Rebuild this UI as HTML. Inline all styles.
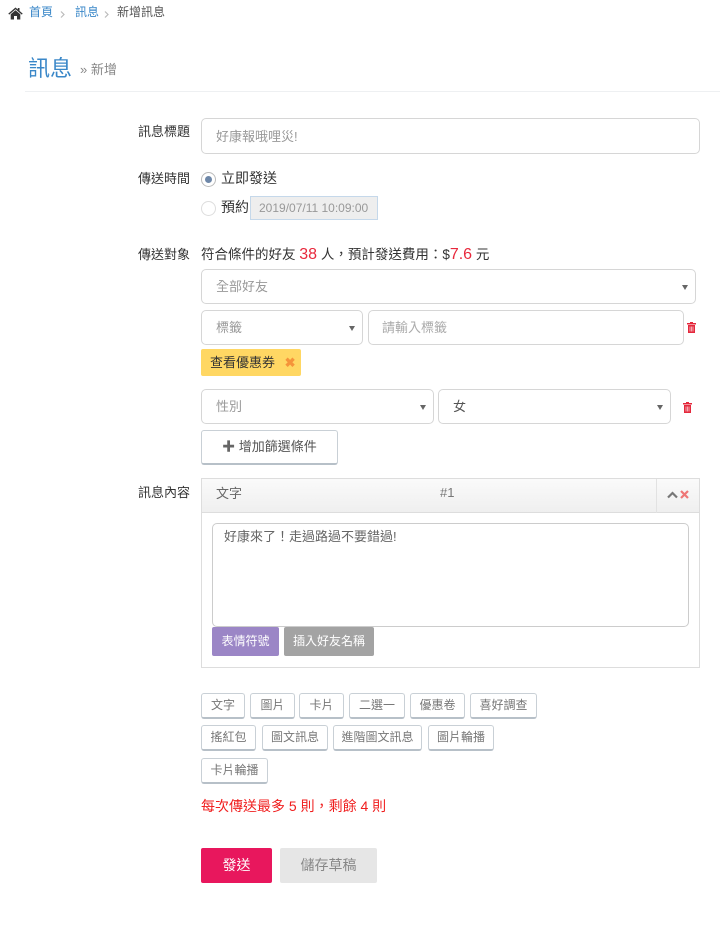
<!DOCTYPE html>
<html><head><meta charset="utf-8"><style>
*{box-sizing:border-box;margin:0;padding:0}
body{width:720px;height:929px;background:#fff;font-family:"Liberation Sans","Noto Sans CJK TC",sans-serif;color:#333;position:relative;overflow:hidden;font-size:13px}
.a{position:absolute;white-space:nowrap;line-height:1.45}
.box{position:absolute;border:1px solid #d6d6d6;border-radius:5px;background:#fff}
.ph{color:#999;font-size:13px}
.caret{position:absolute;right:7px;top:50%;margin-top:-2px;border-left:3px solid transparent;border-right:3px solid transparent;border-top:5px solid #666}
.btn{position:absolute;height:26px;border:1px solid #c9d0d6;border-bottom:2px solid #b7c0c8;border-radius:3px;font-size:12px;color:#777;text-align:center;line-height:23px;background:#fff}
.lbl{position:absolute;left:138px;font-size:13px;color:#333;line-height:1.45}
.trash{position:absolute;width:9px;height:11px}
</style></head><body>
<svg class="a" style="left:8px;top:7px" width="15" height="13" viewBox="0 0 15 13"><path d="M7.5 0.5L0.3 6.6 1.2 7.6 7.5 2.3 13.8 7.6 14.7 6.6 11.5 3.9V1H9.8V2.5Z" fill="#333"/><path d="M2.7 7.2L7.5 3.2 12.3 7.2V12.5H9V9H6V12.5H2.7Z" fill="#333"/></svg>
<div class="a" style="left:29px;top:4px;font-size:12px;color:#3a87c8">首頁</div>
<svg class="a" style="left:60px;top:11px" width="5" height="7" viewBox="0 0 5 7"><path d="M1 0.5L4 3.5 1 6.5" stroke="#bbb" fill="none" stroke-width="1.2"/></svg>
<div class="a" style="left:75px;top:4px;font-size:12px;color:#3a87c8">訊息</div>
<svg class="a" style="left:104px;top:11px" width="5" height="7" viewBox="0 0 5 7"><path d="M1 0.5L4 3.5 1 6.5" stroke="#bbb" fill="none" stroke-width="1.2"/></svg>
<div class="a" style="left:117px;top:4px;font-size:12px;color:#555">新增訊息</div>
<div class="a" style="left:28px;top:53px;font-size:22px;color:#3a87c8">訊息</div>
<div class="a" style="left:80px;top:61px;font-size:13px;color:#888">» 新增</div>
<div class="a" style="left:25px;top:91px;width:695px;height:1px;background:#eef0f2"></div>

<div class="lbl" style="top:123px">訊息標題</div>
<div class="box" style="left:201px;top:118px;width:499px;height:36px"><span class="a ph" style="left:14px;top:9px">好康報哦哩災!</span></div>

<div class="lbl" style="top:170px">傳送時間</div>
<div class="a" style="left:201px;top:172px;width:15px;height:15px;border:1px solid #bbb;border-radius:50%;background:#fff"><div class="a" style="left:3px;top:3px;width:7px;height:7px;border-radius:50%;background:#6e87a8"></div></div>
<div class="a" style="left:221px;top:168px;font-size:14px">立即發送</div>
<div class="a" style="left:201px;top:201px;width:15px;height:15px;border:1px solid #ddd;border-radius:50%"></div>
<div class="a" style="left:221px;top:197px;font-size:14px">預約</div>
<div class="a" style="left:250px;top:196px;width:128px;height:24px;border:1px solid #c5d8ea;background:#eee;color:#999;font-size:12px;line-height:22px;padding-left:8px">2019/07/11 10:09:00</div>

<div class="lbl" style="top:246px">傳送對象</div>
<div class="a" style="left:201px;top:243px;font-size:13.5px">符合條件的好友 <span style="color:#e8283c;font-size:16px">38</span> 人，預計發送費用：$<span style="color:#e8283c;font-size:16px">7.6</span> 元</div>
<div class="box" style="left:201px;top:269px;width:495px;height:35px"><span class="a ph" style="left:14px;top:8px">全部好友</span><i class="caret"></i></div>
<div class="box" style="left:201px;top:310px;width:162px;height:35px"><span class="a ph" style="left:14px;top:8px">標籤</span><i class="caret"></i></div>
<div class="box" style="left:368px;top:310px;width:316px;height:35px"><span class="a ph" style="left:13px;top:8px;color:#aaa">請輸入標籤</span></div>
<svg class="trash" style="left:687px;top:322px" viewBox="0 0 9 11"><rect x="0" y="1" width="9" height="1.5" fill="#e4283c"/><rect x="3" y="0" width="3" height="1.5" fill="#e4283c"/><path d="M1 3H8V11H1Z" fill="#e4283c"/><path d="M3 4.5V9.5M4.5 4.5V9.5M6 4.5V9.5" stroke="#fff" stroke-width="0.6"/></svg>
<div class="a" style="left:201px;top:349px;width:100px;height:27px;background:#ffd763;border-radius:2px;font-size:13px;line-height:27px;padding-left:9px">查看優惠券 <span style="color:#f5943a;font-weight:bold;margin-left:6px">✖</span></div>

<div class="box" style="left:201px;top:389px;width:233px;height:35px"><span class="a ph" style="left:14px;top:8px">性別</span><i class="caret"></i></div>
<div class="box" style="left:438px;top:389px;width:233px;height:35px"><span class="a" style="left:14px;top:8px;color:#555">女</span><i class="caret"></i></div>
<svg class="trash" style="left:683px;top:402px" viewBox="0 0 9 11"><rect x="0" y="1" width="9" height="1.5" fill="#e4283c"/><rect x="3" y="0" width="3" height="1.5" fill="#e4283c"/><path d="M1 3H8V11H1Z" fill="#e4283c"/><path d="M3 4.5V9.5M4.5 4.5V9.5M6 4.5V9.5" stroke="#fff" stroke-width="0.6"/></svg>
<div class="btn" style="left:201px;top:430px;width:137px;height:35px;line-height:32px;font-size:13px;color:#555"><b style="color:#666">✚</b> 增加篩選條件</div>

<div class="lbl" style="top:484px">訊息內容</div>
<div class="a" style="left:201px;top:478px;width:499px;height:190px;border:1px solid #ddd;background:#fff"></div>
<div class="a" style="left:202px;top:479px;width:497px;height:34px;background:linear-gradient(#fafafa,#efefef);border-bottom:1px solid #ddd"></div>
<div class="a" style="left:216px;top:485px;font-size:13px;color:#666">文字</div>
<div class="a" style="left:440px;top:484px;font-size:13px;color:#777">#1</div>
<div class="a" style="left:656px;top:479px;width:1px;height:34px;background:#e2e2e2"></div>
<svg class="a" style="left:667px;top:491px" width="11" height="8" viewBox="0 0 11 8"><path d="M1 6.5L5.5 2 10 6.5" stroke="#777" stroke-width="2.2" fill="none"/></svg>
<svg class="a" style="left:680px;top:490px" width="9" height="9" viewBox="0 0 9 9"><path d="M1 1L8 8M8 1L1 8" stroke="#e77" stroke-width="2.2"/></svg>
<div class="box" style="left:212px;top:523px;width:477px;height:104px;border-color:#ccc"><span class="a" style="left:11px;top:4px;font-size:13px;color:#666">好康來了！走過路過不要錯過!</span></div>
<div class="a" style="left:212px;top:627px;width:67px;height:29px;background:#9b86c6;color:#fff;font-size:12px;line-height:29px;text-align:center;border-radius:2px">表情符號</div>
<div class="a" style="left:284px;top:627px;width:90px;height:29px;background:#a3a3a3;color:#fff;font-size:12px;line-height:29px;text-align:center;border-radius:2px">插入好友名稱</div>

<div class="btn" style="left:201px;top:693px;width:44px">文字</div>
<div class="btn" style="left:250px;top:693px;width:45px">圖片</div>
<div class="btn" style="left:299px;top:693px;width:45px">卡片</div>
<div class="btn" style="left:349px;top:693px;width:56px">二選一</div>
<div class="btn" style="left:410px;top:693px;width:55px">優惠卷</div>
<div class="btn" style="left:470px;top:693px;width:67px">喜好調查</div>
<div class="btn" style="left:201px;top:725px;width:55px">搖紅包</div>
<div class="btn" style="left:262px;top:725px;width:66px">圖文訊息</div>
<div class="btn" style="left:333px;top:725px;width:89px">進階圖文訊息</div>
<div class="btn" style="left:428px;top:725px;width:66px">圖片輪播</div>
<div class="btn" style="left:201px;top:758px;width:67px">卡片輪播</div>

<div class="a" style="left:201px;top:796px;font-size:14px;color:#f01e1e">每次傳送最多 5 則，剩餘 4 則</div>
<div class="a" style="left:201px;top:848px;width:71px;height:35px;background:#e8175d;color:#fff;font-size:14px;line-height:35px;text-align:center;border-radius:2px">發送</div>
<div class="a" style="left:280px;top:848px;width:97px;height:35px;background:#e6e6e6;color:#888;font-size:14px;line-height:35px;text-align:center;border-radius:2px">儲存草稿</div>
</body></html>
